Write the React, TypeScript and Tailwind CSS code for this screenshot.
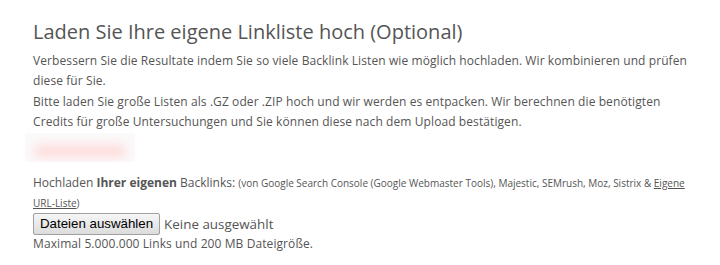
import React from "react";

export default function App() {
  return (
    <div className="w-[720px] h-[265px] bg-white overflow-hidden text-[#555]" style={{ fontFamily: '"Open Sans", sans-serif' }}>
      <div className="pl-[33px] pt-[18px] w-[700px]">
        <h1 className="text-[20px] leading-[28px] font-normal text-[#555]">Laden Sie Ihre eigene Linkliste hoch (Optional)</h1>
        <div className="mt-[5px] text-[12px] leading-[20.4px] tracking-[0.09px]">
          <p>Verbessern Sie die Resultate indem Sie so viele Backlink Listen wie möglich hochladen. Wir kombinieren und prüfen diese für Sie.</p>
          <p>Bitte laden Sie große Listen als .GZ oder .ZIP hoch und wir werden es entpacken. Wir berechnen die benötigten Credits für große Untersuchungen und Sie können diese nach dem Upload bestätigen.</p>
        </div>
      </div>
      <div className="ml-[25px] w-[110px] h-[29px] bg-[#fbf9f9] overflow-hidden flex items-end justify-center pb-[5px]">
        <div className="w-[92px] h-[12px] rounded-full bg-[#ffdcdc] blur-[5px]" />
      </div>
      <div className="pl-[33px] pr-[20px] mt-[11px]">
        <div className="text-[12px] leading-[19px]">
          Hochladen <b className="font-bold">Ihrer eigenen</b> Backlinks: <span className="text-[10px]">(von Google Search Console (Google Webmaster Tools), Majestic, SEMrush, Moz, Sistrix &amp; <u>Eigene URL-Liste</u>)</span>
        </div>
        <div className="flex items-center mt-[0px] h-[22px]">
          <button className="h-[22px] px-[6px] border border-[#a0a0a0] rounded-[2px] bg-gradient-to-b from-[#f6f6f6] to-[#dcdcdc] text-[13.3px] text-black leading-none" style={{ fontFamily: '"Liberation Sans", Arial, sans-serif' }}>Dateien auswählen</button>
          <span className="ml-[4px] text-[13.4px]">Keine ausgewählt</span>
        </div>
        <div className="text-[12px] leading-[18px] tracking-[0.09px]">Maximal 5.000.000 Links und 200 MB Dateigröße.</div>
      </div>
    </div>
  );
}
